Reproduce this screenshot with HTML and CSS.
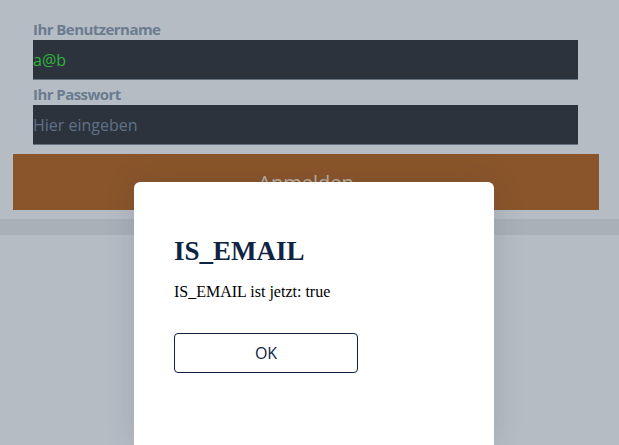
FILE: index.html
```html
<html>
<head>
<title>Anmeldung</title>
<link rel="stylesheet" href="styles.css">
</head>
<body>
<div class="login">
<div class="fields">
<label for="user">Ihr Benutzername</label>
<input type="text" id="user" value="a@b" class="valid">
<label for="pass">Ihr Passwort</label>
<input type="password" id="pass" placeholder="Hier eingeben">
</div>
<button class="submit">Anmelden</button>
</div>
<div class="footer-band"></div>

<div class="dialog">
<h2>IS_EMAIL</h2>
<p>IS_EMAIL ist jetzt: true</p>
<button class="ok">OK</button>
</div>
</body>
</html>
```

FILE: styles.css
```css
body {
margin: 0;
background-color: #b5bcc4;
font-family: "Open Sans", Arial, sans-serif;
height: 445px;
overflow: hidden;
position: relative;
}
.login {
padding: 15px 20px 0 13px;
}
.fields {
padding: 0 21px 0 20px;
}
label {
display: block;
margin-top: 3px;
font-weight: bold;
font-size: 15px;
line-height: 22px;
letter-spacing: -0.55px;
color: #6b7b8f;
}
input {
display: block;
width: 100%;
height: 40px;
margin: 0;
padding: 0;
border: none;
border-bottom: 1px solid #66727f;
background-color: #2d333c;
font-family: "Open Sans", sans-serif;
font-size: 16px;
color: #d0d6dd;
box-sizing: border-box;
outline: none;
}
input.valid {
color: #2db43a;
}
input::placeholder {
color: #5f7189;
}
.submit {
display: block;
width: 100%;
height: 56px;
margin-top: 9px;
border: none;
background-color: #8a552b;
color: #bcb0a4;
font-family: "Open Sans", sans-serif;
font-size: 20px;
}
.footer-band {
height: 16px;
margin-top: 9px;
background-color: #a9b0b8;
}
.dialog {
position: absolute;
left: 134px;
top: 182px;
width: 360px;
height: 263px;
padding: 54px 40px 0;
box-sizing: border-box;
background-color: white;
border-radius: 6px 6px 0 0;
box-shadow: 0 0 30px rgba(40, 50, 65, 0.15);
font-family: "Liberation Serif", "Times New Roman", serif;
}
.dialog h2 {
margin: 0;
font-size: 27px;
line-height: 31px;
color: #0f2342;
}
.dialog p {
margin: 16px 0 0;
font-size: 16px;
color: black;
}
.ok {
margin-top: 32px;
width: 184px;
height: 40px;
background: white;
border: 1px solid #0f2342;
border-radius: 4px;
font-family: "Open Sans", sans-serif;
font-size: 16px;
color: #0f2342;
}
```
